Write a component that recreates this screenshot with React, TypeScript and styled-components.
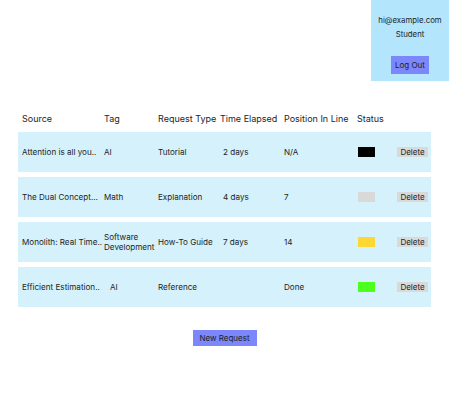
import React from "react";
import styled, { createGlobalStyle } from "styled-components";

const Global = createGlobalStyle`
  html, body { margin: 0; padding: 0; background: #fff; }
  body {
    font-family: Inter, "Noto Sans", sans-serif;
    font-size: 8.1px;
    color: #1e1e1e;
  }
`;

const Page = styled.div`
  width: 449px;
  display: flex;
  flex-direction: column;
`;

const TopBar = styled.div`
  display: flex;
  justify-content: flex-end;
`;

const UserBox = styled.div`
  width: 78px;
  height: 81px;
  box-sizing: border-box;
  background: #b3e5fc;
  display: flex;
  flex-direction: column;
  align-items: center;
  padding-top: 14px;
  font-size: 7.8px;
`;

const UserLine = styled.div`
  line-height: 12px;
  height: 12px;
  margin-bottom: 2px;
`;

const BlueButton = styled.button<{ $w: number; $h: number }>`
  width: ${(p) => p.$w}px;
  height: ${(p) => p.$h}px;
  border: none;
  padding: 0;
  background: #7b87fa;
  color: #1e1e1e;
  font-family: inherit;
  font-size: 8px;
  line-height: ${(p) => p.$h}px;
  cursor: pointer;
`;

const LogOutWrap = styled.div`
  margin-top: 14px;
`;

const Table = styled.div`
  margin: 28px 18px 0;
  display: flex;
  flex-direction: column;
  gap: 5px;
`;

const Row = styled.div<{ $head?: boolean }>`
  display: grid;
  grid-template-columns: 82px 54px 62px 64px 73px 40px 1fr;
  align-items: center;
  padding-left: 4px;
  height: ${(p) => (p.$head ? 20 : 40)}px;
  background: ${(p) => (p.$head ? "transparent" : "#d4f1fc")};
  margin-bottom: ${(p) => (p.$head ? -2 : 0)}px;
`;

const Cell = styled.div<{ $pad?: number }>`
  line-height: 11px;
  padding-left: ${(p) => p.$pad ?? 0}px;
  white-space: nowrap;
`;

const WrapCell = styled(Cell)`
  white-space: normal;
  line-height: 10px;
`;

const HeadCell = styled.div`
  font-size: 9px;
  line-height: 12px;
  white-space: nowrap;
`;

const StatusSquare = styled.div<{ $color: string }>`
  width: 17px;
  height: 10px;
  margin-left: 1px;
  background: ${(p) => p.$color};
`;

const DeleteButton = styled.button`
  justify-self: start;
  height: 10px;
  width: 31px;
  padding: 0;
  border: none;
  background: #d9d9d9;
  color: #1e1e1e;
  font-family: inherit;
  font-size: 8px;
  line-height: 10px;
`;

const Footer = styled.div`
  display: flex;
  justify-content: center;
  margin-top: 23px;
`;

type Req = {
  source: string;
  tag: string;
  tagPad?: number;
  type: string;
  typePad?: number;
  time: string;
  pos: string;
  color: string;
};

const rows: Req[] = [
  { source: "Attention is all you..", tag: "AI", type: "Tutorial", time: "2 days", pos: "N/A", color: "#000000" },
  { source: "The Dual Concept...", tag: "Math", type: "Explanation", time: "4 days", pos: "7", color: "#d9d9d9" },
  { source: "Monolith: Real Time..", tag: "Software Development", type: "How-To Guide", time: "7 days", pos: "14", color: "#fdd835" },
  { source: "Efficient Estimation..", tag: "AI", tagPad: 6, type: "Reference", typePad: 0, time: "", pos: "Done", color: "#4cff1c" },
];

export default function App() {
  return (
    <Page>
      <Global />
      <TopBar>
        <UserBox>
          <UserLine>hi@example.com</UserLine>
          <UserLine>Student</UserLine>
          <LogOutWrap>
            <BlueButton $w={38} $h={18}>Log Out</BlueButton>
          </LogOutWrap>
        </UserBox>
      </TopBar>
      <Table>
        <Row $head>
          <HeadCell>Source</HeadCell>
          <HeadCell>Tag</HeadCell>
          <HeadCell>Request Type</HeadCell>
          <HeadCell>Time Elapsed</HeadCell>
          <HeadCell>Position In Line</HeadCell>
          <HeadCell>Status</HeadCell>
          <HeadCell />
        </Row>
        {rows.map((r) => (
          <Row key={r.source}>
            <Cell>{r.source}</Cell>
            <WrapCell $pad={r.tagPad}>{r.tag}</WrapCell>
            <Cell $pad={r.typePad}>{r.type}</Cell>
            <Cell $pad={3}>{r.time}</Cell>
            <Cell>{r.pos}</Cell>
            <StatusSquare $color={r.color} />
            <DeleteButton>Delete</DeleteButton>
          </Row>
        ))}
      </Table>
      <Footer>
        <BlueButton $w={64} $h={16}>New Request</BlueButton>
      </Footer>
    </Page>
  );
}
